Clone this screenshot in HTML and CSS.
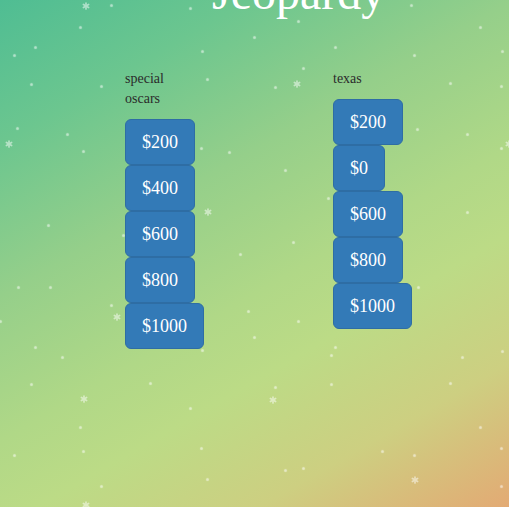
FILE: index.html
```html
<!DOCTYPE html>
<html>
<head>
<meta charset="utf-8">
<title>Jeopardy</title>
<link rel="stylesheet" href="styles.css">
</head>
<body>
<svg class="defs" width="0" height="0" aria-hidden="true">
  <symbol id="flake" viewBox="0 0 8 8">
    <g stroke="#fff" stroke-width="1.7" stroke-linecap="round">
      <line x1="4" y1="1" x2="4" y2="7"/>
      <line x1="1.4" y1="2.5" x2="6.6" y2="5.5"/>
      <line x1="1.4" y1="5.5" x2="6.6" y2="2.5"/>
    </g>
  </symbol>
</svg>
<div class="snow" aria-hidden="true">
  <span class="dots"></span>
  <svg class="flake f1"><use href="#flake"/></svg>
  <svg class="flake f2"><use href="#flake"/></svg>
  <svg class="flake f3"><use href="#flake"/></svg>
  <svg class="flake f4"><use href="#flake"/></svg>
  <svg class="flake f5"><use href="#flake"/></svg>
  <svg class="flake f6"><use href="#flake"/></svg>
  <svg class="flake f7"><use href="#flake"/></svg>
  <svg class="flake f8"><use href="#flake"/></svg>
  <svg class="flake f9"><use href="#flake"/></svg>
  <svg class="flake f10"><use href="#flake"/></svg>
</div>
<main class="page">
  <h1 class="title">Jeopardy</h1>
  <div class="board">
    <section class="category">
      <h2 class="label">special oscars</h2>
      <button class="btn">$200</button>
      <button class="btn">$400</button>
      <button class="btn">$600</button>
      <button class="btn">$800</button>
      <button class="btn">$1000</button>
    </section>
    <section class="category">
      <h2 class="label">texas</h2>
      <button class="btn">$200</button>
      <button class="btn">$0</button>
      <button class="btn">$600</button>
      <button class="btn">$800</button>
      <button class="btn">$1000</button>
    </section>
  </div>
</main>
</body>
</html>
```

FILE: styles.css
```css
html, body {
  margin: 0;
  padding: 0;
  height: 100%;
  overflow: hidden;
}

body {
  font-family: "Liberation Serif", "Times New Roman", serif;
  font-size: 14px;
  line-height: 20px;
  color: #333;
  background: linear-gradient(150deg,
    #4fbd93 0%,
    #6cc68f 18%,
    #95cf8a 37%,
    #b0d887 55%,
    #bcdb86 66%,
    #cdcf81 82%,
    #e3aa74 100%);
}

.defs {
  position: absolute;
}

.snow {
  position: absolute;
  left: 0;
  top: 0;
  width: 509px;
  height: 507px;
  pointer-events: none;
}

.dots {
  position: absolute;
  left: 0;
  top: 0;
  width: 3px;
  height: 3px;
  border-radius: 50%;
  box-shadow:
    110px 4px 1px 0 rgba(255,255,255,.55),
    189px 7px 1px 0 rgba(255,255,255,.55),
    79px 26px 1px 0 rgba(255,255,255,.55),
    297px 20px 1px 0 rgba(255,255,255,.55),
    410px 4px 1px 0 rgba(255,255,255,.55),
    479px 26px 1px 0 rgba(255,255,255,.55),
    253px 36px 1px 0 rgba(255,255,255,.55),
    34px 46px 1px 0 rgba(255,255,255,.55),
    13px 54px 1px 0 rgba(255,255,255,.55),
    201px 50px 1px 0 rgba(255,255,255,.55),
    334px 46px 1px 0 rgba(255,255,255,.55),
    413px 54px 1px 0 rgba(255,255,255,.55),
    501px 50px 1px 0 rgba(255,255,255,.55),
    302px 67px 1px 0 rgba(255,255,255,.55),
    206px 78px 1px 0 rgba(255,255,255,.55),
    30px 83px 1px 0 rgba(255,255,255,.55),
    100px 85px 1px 0 rgba(255,255,255,.55),
    274px 86px 1px 0 rgba(255,255,255,.55),
    449px 82px 1px 0 rgba(255,255,255,.55),
    500px 85px 1px 0 rgba(255,255,255,.55),
    16px 127px 1px 0 rgba(255,255,255,.55),
    66px 133px 1px 0 rgba(255,255,255,.55),
    82px 150px 1px 0 rgba(255,255,255,.55),
    200px 147px 1px 0 rgba(255,255,255,.55),
    228px 151px 1px 0 rgba(255,255,255,.55),
    416px 128px 1px 0 rgba(255,255,255,.55),
    466px 133px 1px 0 rgba(255,255,255,.55),
    500px 147px 1px 0 rgba(255,255,255,.55),
    284px 169px 1px 0 rgba(255,255,255,.55),
    327px 197px 1px 0 rgba(255,255,255,.55),
    466px 211px 1px 0 rgba(255,255,255,.55),
    47px 224px 1px 0 rgba(255,255,255,.55),
    122px 234px 1px 0 rgba(255,255,255,.55),
    292px 241px 1px 0 rgba(255,255,255,.55),
    239px 253px 1px 0 rgba(255,255,255,.55),
    17px 286px 1px 0 rgba(255,255,255,.55),
    49px 286px 1px 0 rgba(255,255,255,.55),
    417px 286px 1px 0 rgba(255,255,255,.55),
    110px 304px 1px 0 rgba(255,255,255,.55),
    247px 310px 1px 0 rgba(255,255,255,.55),
    297px 320px 1px 0 rgba(255,255,255,.55),
    -1px 320px 1px 0 rgba(255,255,255,.55),
    253px 336px 1px 0 rgba(255,255,255,.55),
    34px 346px 1px 0 rgba(255,255,255,.55),
    201px 349px 1px 0 rgba(255,255,255,.55),
    334px 346px 1px 0 rgba(255,255,255,.55),
    61px 356px 1px 0 rgba(255,255,255,.55),
    330px 354px 1px 0 rgba(255,255,255,.55),
    461px 356px 1px 0 rgba(255,255,255,.55),
    501px 350px 1px 0 rgba(255,255,255,.55),
    30px 383px 1px 0 rgba(255,255,255,.55),
    149px 382px 1px 0 rgba(255,255,255,.55),
    274px 386px 1px 0 rgba(255,255,255,.55),
    330px 383px 1px 0 rgba(255,255,255,.55),
    449px 382px 1px 0 rgba(255,255,255,.55),
    189px 407px 1px 0 rgba(255,255,255,.55),
    79px 426px 1px 0 rgba(255,255,255,.55),
    479px 426px 1px 0 rgba(255,255,255,.55),
    200px 447px 1px 0 rgba(255,255,255,.55),
    13px 454px 1px 0 rgba(255,255,255,.55),
    82px 450px 1px 0 rgba(255,255,255,.55),
    381px 450px 1px 0 rgba(255,255,255,.55),
    413px 454px 1px 0 rgba(255,255,255,.55),
    500px 447px 1px 0 rgba(255,255,255,.55),
    284px 469px 1px 0 rgba(255,255,255,.55),
    302px 467px 1px 0 rgba(255,255,255,.55),
    206px 478px 1px 0 rgba(255,255,255,.55),
    100px 485px 1px 0 rgba(255,255,255,.55),
    500px 485px 1px 0 rgba(255,255,255,.55);
}

.flake {
  position: absolute;
  width: 8px;
  height: 8px;
  opacity: .5;
}
.f1 { left: 82px; top: 2px; }
.f2 { left: 293px; top: 80px; }
.f3 { left: 5px; top: 140px; }
.f4 { left: 204px; top: 208px; }
.f5 { left: 113px; top: 313px; }
.f6 { left: 80px; top: 395px; }
.f7 { left: 269px; top: 396px; }
.f8 { left: 411px; top: 476px; }
.f9 { left: 82px; top: 501px; }
.f10 { left: 505px; top: 140px; }

.page {
  position: relative;
  padding-left: 125px;
}

.title {
  margin: -34px 0 0 87px;
  font-size: 48px;
  line-height: 53px;
  font-weight: normal;
  color: #fff;
}

.board {
  display: grid;
  grid-template-columns: 208px 208px;
  margin-top: 48px;
}

.category {
  display: flex;
  flex-direction: column;
  align-items: flex-start;
}

.label {
  width: 50px;
  margin: 2px 0 10px;
  font-size: 14px;
  line-height: 20px;
  font-weight: normal;
  color: #2b2b2b;
}

.btn {
  display: block;
  margin: 0;
  padding: 10px 16px;
  font-family: "Liberation Serif", "Times New Roman", serif;
  font-size: 18px;
  line-height: 24px;
  color: #fff;
  background: #337ab7;
  border: 1px solid #2e6da4;
  border-radius: 6px;
  cursor: pointer;
}
```
